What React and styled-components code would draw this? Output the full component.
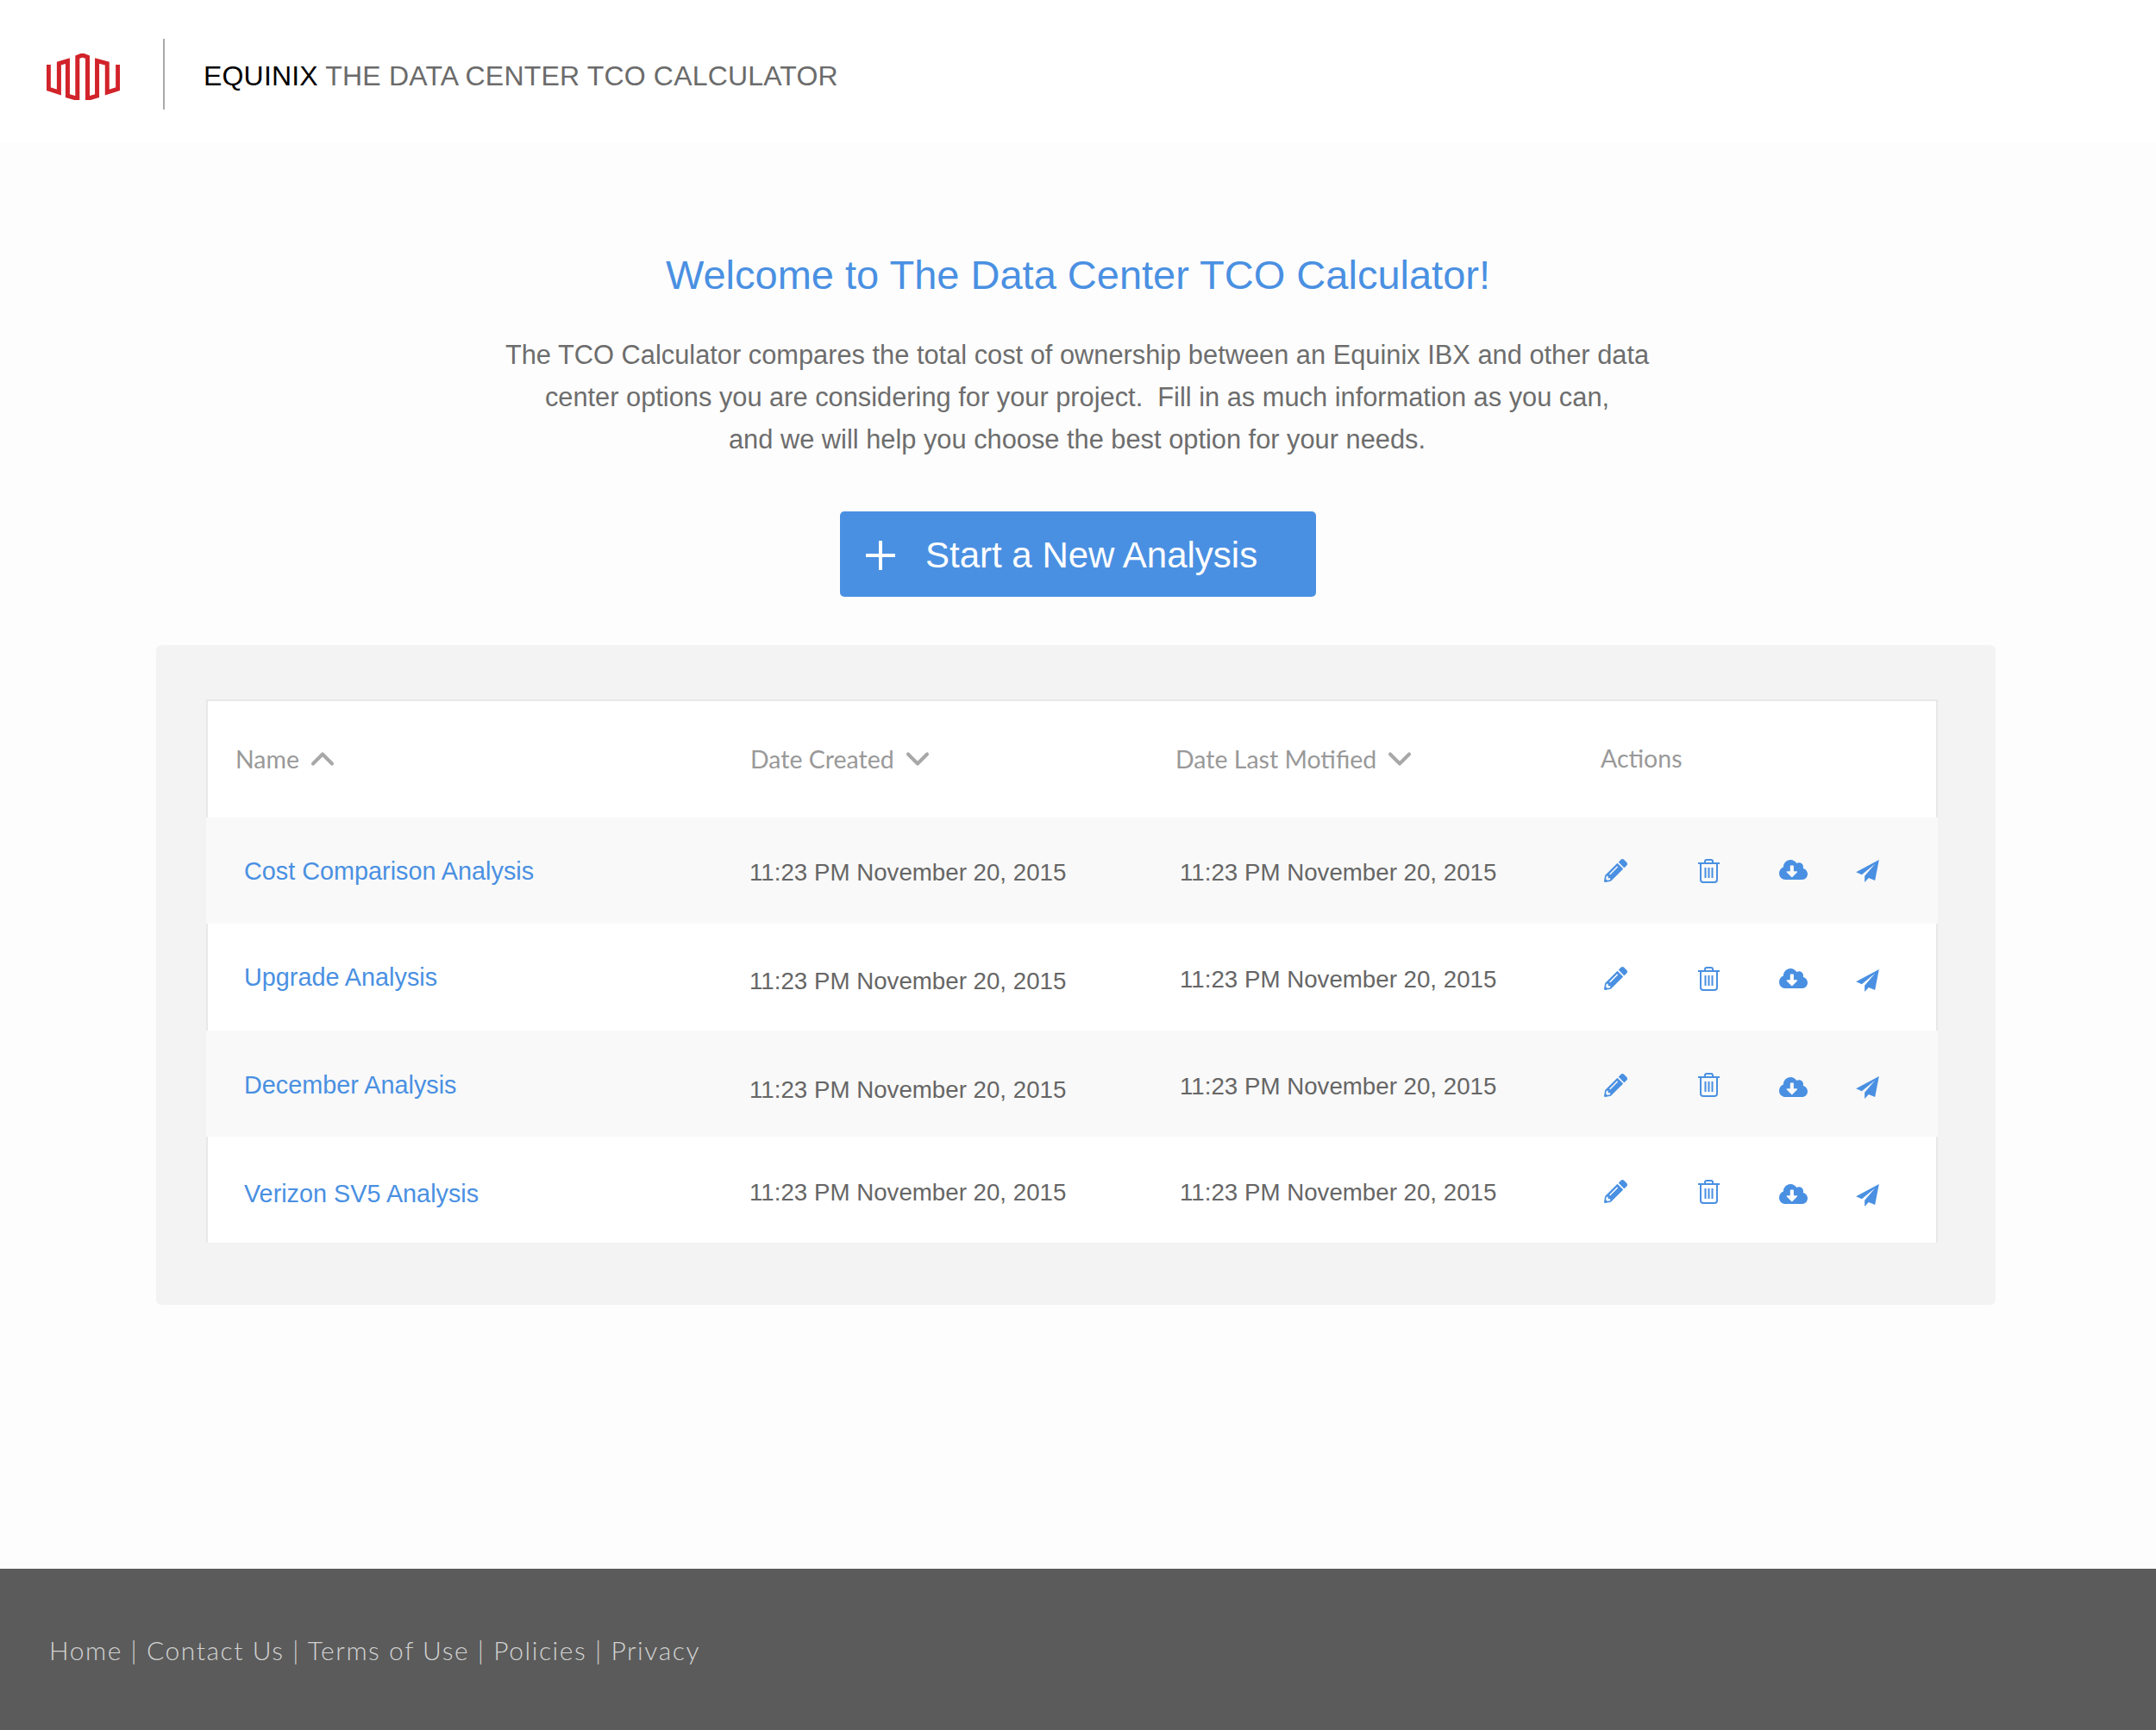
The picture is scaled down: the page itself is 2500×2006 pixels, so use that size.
import React from 'react';
import styled, { createGlobalStyle } from 'styled-components';
import { FaPencilAlt, FaCloudDownloadAlt } from 'react-icons/fa';
import { FiChevronDown, FiChevronUp } from 'react-icons/fi';
import { Plus } from 'lucide-react';

const blue = '#4a90e2';

const GlobalStyle = createGlobalStyle`
  html, body {
    margin: 0;
    padding: 0;
    background: #fdfdfd;
    font-family: "Liberation Sans", Arial, sans-serif;
  }
`;

const Page = styled.div`
  min-height: 2006px;
  display: flex;
  flex-direction: column;
`;

const Header = styled.header`
  height: 165px;
  background: #fff;
  display: flex;
  align-items: center;
  padding: 6px 0 0 54px;
  box-sizing: border-box;
`;

const LogoMark = styled.svg`
  margin-top: 6px;
`;

const Divider = styled.div`
  width: 2px;
  height: 82px;
  background: #a9a9a9;
  margin: 0 45px 0 50px;
`;

const Title = styled.div`
  margin-top: 6px;
  font-size: 32px;
  letter-spacing: 0.18px;
  color: #6b6b6b;
  b {
    font-weight: normal;
    color: #000;
  }
`;

const Main = styled.main`
  flex: 1;
  display: flex;
  flex-direction: column;
  align-items: center;
  padding-top: 124px;
`;

const Heading = styled.h1`
  margin: 0;
  font-size: 47px;
  line-height: 60px;
  font-weight: normal;
  color: ${blue};
`;

const Intro = styled.p`
  margin: 38px 0 0;
  padding-right: 2px;
  font-size: 30.8px;
  line-height: 49px;
  color: #6d6d6d;
  text-align: center;
`;

const StartButton = styled.button`
  margin-top: 59px;
  width: 552px;
  height: 99px;
  border: 0;
  border-radius: 5px;
  background: ${blue};
  color: #fff;
  font: inherit;
  font-size: 42px;
  display: flex;
  align-items: center;
  padding: 2px 0 0 18px;
  gap: 23px;
  box-sizing: border-box;
`;

const Panel = styled.section`
  margin: 56px 0 0 181px;
  align-self: flex-start;
  width: 2133px;
  height: 765px;
  background: #f3f3f3;
  border-radius: 6px;
  padding: 63px 67px 0 58px;
  box-sizing: border-box;
`;

const Table = styled.div`
  background: #fff;
  border: solid #e8e8e8;
  border-width: 2px 2px 0;
`;

const HeadRow = styled.div`
  height: 135px;
  padding-bottom: 2px;
  box-sizing: border-box;
  display: grid;
  grid-template-columns: 629px 493px 493px 1fr;
  align-items: center;
  color: #999;
  font-family: Lato, sans-serif;
  font-size: 28.5px;
`;

const HeadCell = styled.div`
  display: flex;
  align-items: center;
  gap: 5px;
  padding-left: ${props => props.$indent || 0}px;
  padding-bottom: ${props => props.$lift || 0}px;
  svg {
    font-size: 44px;
    stroke-width: 2.2;
    color: #a8a8a8;
  }
`;

const Row = styled.div`
  height: 123.3px;
  background: ${props => (props.$striped ? '#f9f9f9' : '#fff')};
  margin: ${props => (props.$striped ? '0 -2px' : '0')};
  padding: ${props => (props.$striped ? '0 2px' : '0')};
  display: grid;
  grid-template-columns: 628px 499px 487px 1fr;
  align-items: center;
  font-size: 27.7px;
  color: #666;
`;

const NameLink = styled.a`
  color: ${blue};
  font-size: 28.8px;
  padding-left: 42px;
  margin-top: ${props => props.$nudge * 2}px;
`;

const DateCell = styled.div`
  margin-top: ${props => props.$nudge * 2}px;
`;

const Actions = styled.div`
  display: grid;
  grid-template-columns: 108px 98px 86px 36px;
  align-items: center;
  color: ${blue};
`;

const IconCell = styled.span`
  display: flex;
  justify-content: center;
  align-items: center;
  width: 36px;
  height: 30px;
  margin-top: ${props => props.$nudge * 2}px;
`;

const Footer = styled.footer`
  height: 187px;
  background: #5b5b5b;
  color: #d2d2d2;
  display: flex;
  align-items: center;
  padding-left: 57px;
  font-family: Lato, sans-serif;
  font-weight: 300;
  font-size: 30px;
  letter-spacing: 1.55px;
`;

const Logo = () => (
  <LogoMark width="85" height="54" viewBox="0 0 254 160" fill="none" stroke="#d2232a" strokeWidth="15">
    <path d="M7 38V122L43 134V34L73 25V146L107 156V12L124 5L142 12V156L175 146V25L210 34V134L247 122V38" />
  </LogoMark>
);

const TrashIcon = () => (
  <svg width="25" height="28" viewBox="0 0 25 28" fill="none" stroke="currentColor" strokeWidth="2">
    <path d="M0 5H25M8 5V3Q8 1 10 1H15Q17 1 17 3V5M3 5V24Q3 27 6 27H19Q22 27 22 24V5M8.5 10V22M12.5 10V22M16.5 10V22" />
  </svg>
);

const PlaneIcon = () => (
  <svg width="27" height="26" viewBox="0 0 80 78" fill="currentColor">
    <path d="M80 0L0 43L20 52L66 14L30 56V78L44 63L66 72Z" />
  </svg>
);

const rows = [
  { name: 'Cost Comparison Analysis', striped: true, n: [1, 2, 2], i: [0, 0, -1, 0] },
  { name: 'Upgrade Analysis', n: [1, 5, 3], i: [2, 2, 2, 4] },
  { name: 'December Analysis', striped: true, n: [2, 8, 4], i: [2, 2, 4, 5] },
  { name: 'Verizon SV5 Analysis', n: [5, 3, 3], i: [2, 2, 5, 6] },
];

const App = () => (
  <Page>
    <GlobalStyle />
    <Header>
      <Logo />
      <Divider />
      <Title>
        <b>EQUINIX</b> THE DATA CENTER TCO CALCULATOR
      </Title>
    </Header>
    <Main>
      <Heading>Welcome to The Data Center TCO Calculator!</Heading>
      <Intro>
        The TCO Calculator compares the total cost of ownership between an Equinix IBX and other data
        <br />
        center options you are considering for your project.&nbsp; Fill in as much information as you can,
        <br />
        and we will help you choose the best option for your needs.
      </Intro>
      <StartButton>
        <Plus size={58} strokeWidth={1.65} strokeLinecap="butt" />
        Start a New Analysis
      </StartButton>
      <Panel>
        <Table>
          <HeadRow>
            <HeadCell $indent={32}>Name <FiChevronUp /></HeadCell>
            <HeadCell>Date Created <FiChevronDown /></HeadCell>
            <HeadCell>Date Last Motified <FiChevronDown /></HeadCell>
            <HeadCell $lift={2}>Actions</HeadCell>
          </HeadRow>
          {rows.map(row => (
            <Row key={row.name} $striped={row.striped}>
              <NameLink $nudge={row.n[0]}>{row.name}</NameLink>
              <DateCell $nudge={row.n[1]}>11:23 PM November 20, 2015</DateCell>
              <DateCell $nudge={row.n[2]}>11:23 PM November 20, 2015</DateCell>
              <Actions>
                <IconCell $nudge={row.i[0]}><FaPencilAlt size={27} /></IconCell>
                <IconCell $nudge={row.i[1]}><TrashIcon /></IconCell>
                <IconCell $nudge={row.i[2]}><FaCloudDownloadAlt size={33} /></IconCell>
                <IconCell $nudge={row.i[3]}><PlaneIcon /></IconCell>
              </Actions>
            </Row>
          ))}
        </Table>
      </Panel>
    </Main>
    <Footer>Home | Contact Us | Terms of Use | Policies | Privacy</Footer>
  </Page>
);

export default App;
